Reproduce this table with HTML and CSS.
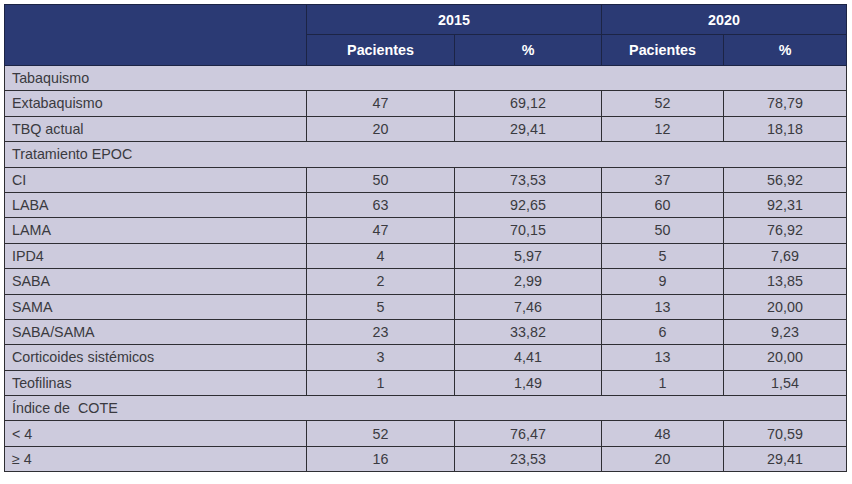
FILE: index.html
```html
<!DOCTYPE html>
<html lang="es">
<head>
<meta charset="utf-8">
<title>Tabla</title>
<link rel="stylesheet" href="styles.css">
</head>
<body>
<div class="wrap">
<table class="data">
  <colgroup>
    <col class="c-label"><col class="c-a"><col class="c-b"><col class="c-c"><col class="c-d">
  </colgroup>
  <thead>
    <tr class="h1">
      <th rowspan="2" class="blank"></th>
      <th colspan="2">2015</th>
      <th colspan="2">2020</th>
    </tr>
    <tr class="h2">
      <th>Pacientes</th><th>%</th><th>Pacientes</th><th>%</th>
    </tr>
  </thead>
  <tbody>
    <tr class="sec"><td colspan="5">Tabaquismo</td></tr>
    <tr><td>Extabaquismo</td><td>47</td><td>69,12</td><td>52</td><td>78,79</td></tr>
    <tr><td>TBQ actual</td><td>20</td><td>29,41</td><td>12</td><td>18,18</td></tr>
    <tr class="sec"><td colspan="5">Tratamiento EPOC</td></tr>
    <tr><td>CI</td><td>50</td><td>73,53</td><td>37</td><td>56,92</td></tr>
    <tr><td>LABA</td><td>63</td><td>92,65</td><td>60</td><td>92,31</td></tr>
    <tr><td>LAMA</td><td>47</td><td>70,15</td><td>50</td><td>76,92</td></tr>
    <tr><td>IPD4</td><td>4</td><td>5,97</td><td>5</td><td>7,69</td></tr>
    <tr><td>SABA</td><td>2</td><td>2,99</td><td>9</td><td>13,85</td></tr>
    <tr><td>SAMA</td><td>5</td><td>7,46</td><td>13</td><td>20,00</td></tr>
    <tr><td>SABA/SAMA</td><td>23</td><td>33,82</td><td>6</td><td>9,23</td></tr>
    <tr><td>Corticoides sistémicos</td><td>3</td><td>4,41</td><td>13</td><td>20,00</td></tr>
    <tr><td>Teofilinas</td><td>1</td><td>1,49</td><td>1</td><td>1,54</td></tr>
    <tr class="sec"><td colspan="5">Índice de&nbsp; COTE</td></tr>
    <tr><td>&lt; 4</td><td>52</td><td>76,47</td><td>48</td><td>70,59</td></tr>
    <tr><td>≥ 4</td><td>16</td><td>23,53</td><td>20</td><td>29,41</td></tr>
  </tbody>
</table>
</div>
</body>
</html>
```
FILE: styles.css
```css
html, body {
  margin: 0;
  padding: 0;
  background: #ffffff;
}
.wrap {
  padding: 4px 0 0 4px;
}
.data {
  border-collapse: collapse;
  table-layout: fixed;
  width: 843px;
  font-family: "Liberation Sans", Arial, sans-serif;
  font-size: 14.3px;
  color: #3a3a40;
}
.c-label { width: 302px; }
.c-a { width: 148px; }
.c-b { width: 147px; }
.c-c { width: 122px; }
.c-d { width: 123px; }
.data th {
  background: #2b3a74;
  color: #ffffff;
  font-weight: bold;
  text-align: center;
  border: 1px solid #1c2445;
  padding: 0;
}
.h1 th { height: 29px; }
.h2 th { height: 30px; }
.data td {
  background: #cdcbdd;
  border: 1px solid #2e2e33;
  text-align: center;
  height: 24.4px;
  padding: 0;
  line-height: 1;
}
.data td:first-child {
  text-align: left;
  padding-left: 7px;
}
.sec td {
  text-align: left;
}
```
